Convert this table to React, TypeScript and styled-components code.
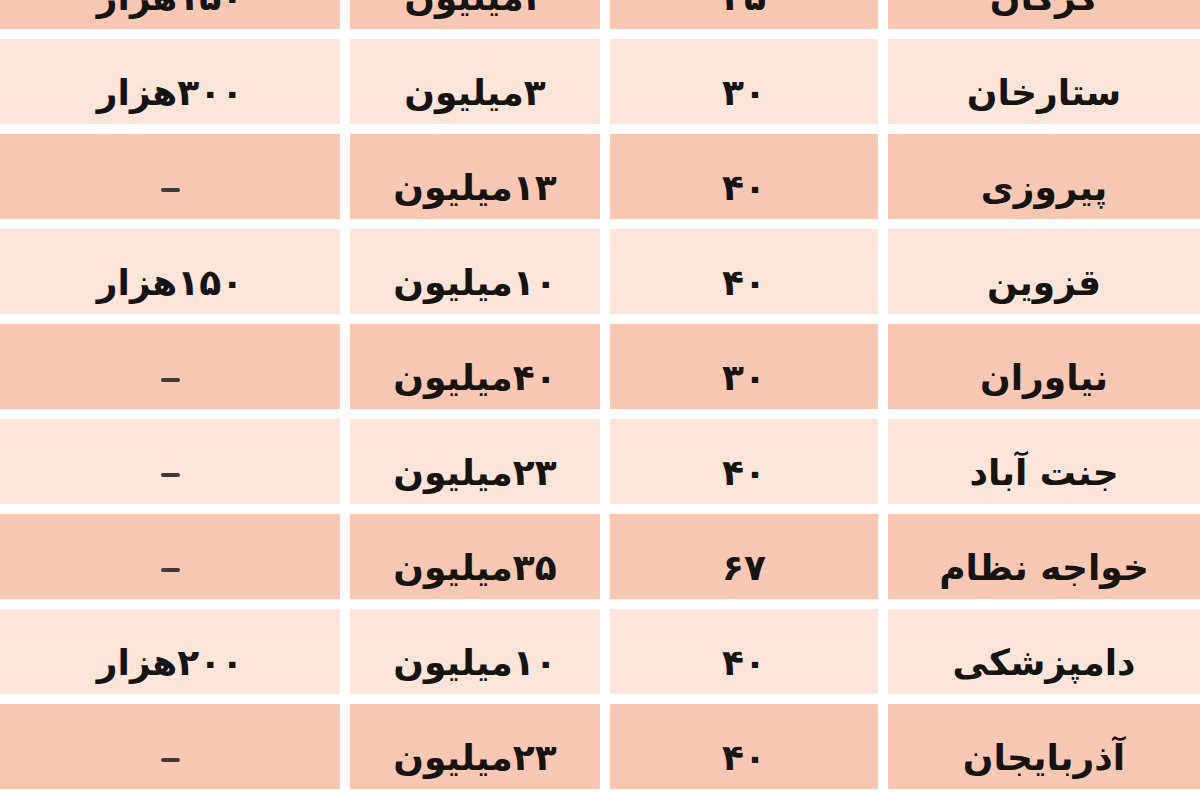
import React, { FC } from 'react';
import styled, { createGlobalStyle } from 'styled-components';

const GlobalStyle = createGlobalStyle`
  html, body {
    margin: 0;
    padding: 0;
    background: #ffffff;
    overflow: hidden;
  }
`;

const Viewport = styled.div`
  width: 1200px;
  height: 800px;
  overflow: hidden;
  background: #ffffff;
`;

const Table = styled.div`
  display: grid;
  grid-template-columns: 312px 268px 250px 340px;
  grid-auto-rows: 85px;
  column-gap: 10px;
  row-gap: 10px;

  margin-top: -56px;
  direction: rtl;
`;

const Cell = styled.div<{ $dark: boolean }>`
  display: flex;
  align-items: center;
  justify-content: center;

  padding-top: 22px;
  box-sizing: border-box;
  background: ${(props) => (props.$dark ? '#f9c8b4' : '#fde5da')};

  font-family: 'DejaVu Sans', 'Noto Sans', sans-serif;
  font-weight: 700;
  font-size: 36px;
  line-height: 1;
  color: #161311;
  white-space: nowrap;
`;

const Dash = styled.span`
  display: block;
  width: 19px;
  height: 4px;
  margin-top: 4px;
  border-radius: 2px;
  background: #3d3a38;
`;

interface Row {
  name: string;
  area: string;
  price: string;
  rent: string;
}

const rows: Row[] = [
  { name: 'گرگان', area: '۴۵', price: '۲میلیون', rent: '۱۵۰هزار' },
  { name: 'ستارخان', area: '۳۰', price: '۳میلیون', rent: '۳۰۰هزار' },
  { name: 'پیروزی', area: '۴۰', price: '۱۳میلیون', rent: '' },
  { name: 'قزوین', area: '۴۰', price: '۱۰میلیون', rent: '۱۵۰هزار' },
  { name: 'نیاوران', area: '۳۰', price: '۴۰میلیون', rent: '' },
  { name: 'جنت آباد', area: '۴۰', price: '۲۳میلیون', rent: '' },
  { name: 'خواجه نظام', area: '۶۷', price: '۳۵میلیون', rent: '' },
  { name: 'دامپزشکی', area: '۴۰', price: '۱۰میلیون', rent: '۲۰۰هزار' },
  { name: 'آذربایجان', area: '۴۰', price: '۲۳میلیون', rent: '' },
];

const App: FC = () => {
  return (
    <Viewport>
      <GlobalStyle />
      <Table>
        {rows.map((row, i) => {
          const dark = i % 2 === 0;
          return (
            <React.Fragment key={row.name}>
              <Cell $dark={dark}>{row.name}</Cell>
              <Cell $dark={dark}>{row.area}</Cell>
              <Cell $dark={dark}>{row.price}</Cell>
              <Cell $dark={dark}>{row.rent || <Dash aria-label="–" />}</Cell>
            </React.Fragment>
          );
        })}
      </Table>
    </Viewport>
  );
};

export default App;
